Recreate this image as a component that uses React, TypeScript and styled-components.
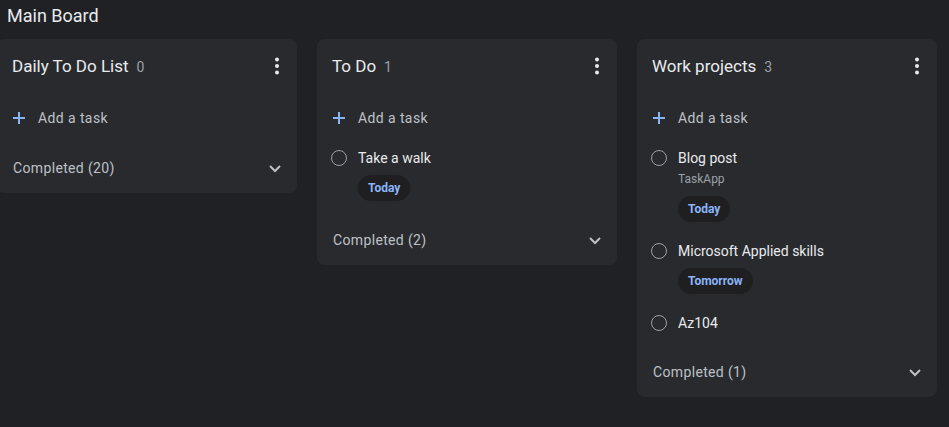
import React from "react";
import styled, { createGlobalStyle } from "styled-components";

const GlobalStyle = createGlobalStyle`
  body {
    margin: 0;
    background: #202124;
    font-family: Roboto, "Liberation Sans", Arial, sans-serif;
    color: #e8eaed;
    overflow: hidden;
  }
`;

const Page = styled.div`
  width: 949px;
  height: 427px;
  background: #202124;
`;

const Heading = styled.h1`
  margin: 0;
  padding: 4px 7px 0;
  height: 39px;
  box-sizing: border-box;
  font-size: 18px;
  font-weight: 400;
  line-height: 24px;
  color: #e8eaed;
`;

const Board = styled.div`
  display: flex;
  align-items: flex-start;
  gap: 20px;
  margin-left: -3px;
`;

const Card = styled.section`
  width: 300px;
  flex-shrink: 0;
  background: #292a2e;
  border-radius: 8px;
`;

const Header = styled.div`
  height: 54px;
  display: flex;
  align-items: center;
  justify-content: space-between;
  padding: 0 8px 0 15px;
`;

const Title = styled.div`
  display: flex;
  align-items: baseline;
  font-size: 17px;
  font-weight: 400;
  color: #e8eaed;
`;

const Count = styled.span`
  margin-left: 8px;
  font-size: 14px;
  font-weight: 400;
  color: #9aa0a6;
`;

const IconBox = styled.div`
  width: 24px;
  height: 24px;
  display: flex;
  align-items: center;
  justify-content: center;
`;

const AddRow = styled.div`
  height: 50px;
  display: flex;
  align-items: center;
  gap: 13px;
  padding-left: 16px;
  font-size: 14px;
  letter-spacing: 0.4px;
  color: #bdc1c6;
`;

const Item = styled.div`
  display: flex;
  gap: 11px;
  padding: 5px 15px 14px 14px;
`;

const Circle = styled.div`
  width: 16px;
  height: 16px;
  margin-top: 2px;
  box-sizing: border-box;
  border: 1.5px solid #9aa0a6;
  border-radius: 50%;
  flex-shrink: 0;
`;

const ItemBody = styled.div`
  display: flex;
  flex-direction: column;
  align-items: flex-start;
`;

const ItemTitle = styled.div`
  font-size: 14px;
  line-height: 20px;
  color: #e8eaed;
`;

const ItemNote = styled.div`
  margin-top: 1px;
  font-size: 12px;
  line-height: 20px;
  color: #9aa0a6;
`;

const Chip = styled.span`
  margin-top: 7px;
  height: 26px;
  padding: 0 10px;
  display: inline-flex;
  align-items: center;
  border-radius: 13px;
  background: #1f1f22;
  font-size: 12px;
  font-weight: 700;
  color: #8ab4f8;
`;

const CompletedRow = styled.div`
  height: 50px;
  display: flex;
  align-items: center;
  justify-content: space-between;
  padding: 0 10px 0 16px;
  font-size: 14px;
  letter-spacing: 0.35px;
  color: #bdc1c6;
`;

const Kebab = () => (
  <svg width="24" height="24" viewBox="0 0 24 24" fill="#e8eaed">
    <circle cx="12" cy="5.5" r="2" />
    <circle cx="12" cy="12" r="2" />
    <circle cx="12" cy="18.5" r="2" />
  </svg>
);

const Plus = () => (
  <svg width="12" height="12" viewBox="0 0 12 12" stroke="#8ab4f8" strokeWidth="2">
    <path d="M6 0v12M0 6h12" />
  </svg>
);

const Chevron = () => (
  <svg width="24" height="24" viewBox="0 0 24 24" fill="none" stroke="#bdc1c6" strokeWidth="2">
    <path d="M7 10l5 5 5-5" />
  </svg>
);

type Task = { title: string; note?: string; due?: string };
type List = { name: string; tasks: Task[]; completed: number };

const lists: List[] = [
  { name: "Daily To Do List", tasks: [], completed: 20 },
  { name: "To Do", tasks: [{ title: "Take a walk", due: "Today" }], completed: 2 },
  {
    name: "Work projects",
    tasks: [
      { title: "Blog post", note: "TaskApp", due: "Today" },
      { title: "Microsoft Applied skills", due: "Tomorrow" },
      { title: "Az104" },
    ],
    completed: 1,
  },
];

const App: React.FC = () => (
  <Page>
    <GlobalStyle />
    <Heading>Main Board</Heading>
    <Board>
      {lists.map((list) => (
        <Card key={list.name}>
          <Header>
            <Title>
              {list.name}
              <Count>{list.tasks.length}</Count>
            </Title>
            <IconBox>
              <Kebab />
            </IconBox>
          </Header>
          <AddRow>
            <Plus />
            Add a task
          </AddRow>
          {list.tasks.map((task) => (
            <Item key={task.title}>
              <Circle />
              <ItemBody>
                <ItemTitle>{task.title}</ItemTitle>
                {task.note && <ItemNote>{task.note}</ItemNote>}
                {task.due && <Chip>{task.due}</Chip>}
              </ItemBody>
            </Item>
          ))}
          <CompletedRow>
            Completed ({list.completed})
            <IconBox>
              <Chevron />
            </IconBox>
          </CompletedRow>
        </Card>
      ))}
    </Board>
  </Page>
);

export default App;
